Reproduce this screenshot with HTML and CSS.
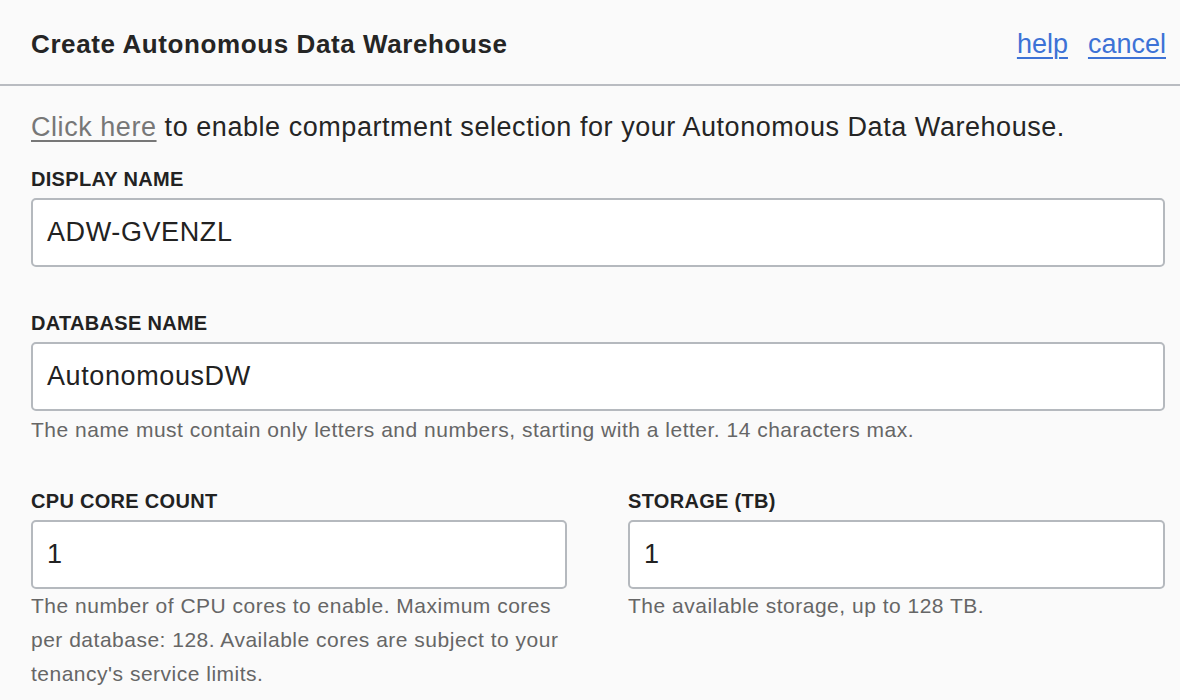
FILE: index.html
```html
<!DOCTYPE html>
<html lang="en">
<head>
<meta charset="utf-8">
<title>Create Autonomous Data Warehouse</title>
<link rel="stylesheet" href="styles.css">
</head>
<body>
<div class="dialog">
  <header class="dialog-header">
    <h1 class="dialog-title">Create Autonomous Data Warehouse</h1>
    <nav class="header-links">
      <a href="#" class="header-link">help</a>
      <a href="#" class="header-link">cancel</a>
    </nav>
  </header>
  <form class="dialog-body">
    <p class="intro"><a href="#" class="muted-link">Click here</a> to enable compartment selection for your Autonomous Data Warehouse.</p>

    <div class="field field-first">
      <label class="field-label">DISPLAY NAME</label>
      <div class="input">ADW-GVENZL</div>
    </div>

    <div class="field field-db">
      <label class="field-label">DATABASE NAME</label>
      <div class="input">AutonomousDW</div>
      <p class="help help-single">The name must contain only letters and numbers, starting with a letter. 14 characters max.</p>
    </div>

    <div class="field-row">
      <div class="field">
        <label class="field-label">CPU CORE COUNT</label>
        <div class="input">1</div>
        <p class="help">The number of CPU cores to enable. Maximum cores per database: 128. Available cores are subject to your tenancy's service limits.</p>
      </div>
      <div class="field">
        <label class="field-label">STORAGE (TB)</label>
        <div class="input">1</div>
        <p class="help">The available storage, up to 128 TB.</p>
      </div>
    </div>
  </form>
</div>
</body>
</html>
```

FILE: styles.css
```css
* { box-sizing: border-box; }

html, body {
  margin: 0;
  padding: 0;
  background: #fafafa;
  font-family: "Liberation Sans", Arial, Helvetica, sans-serif;
  color: #252525;
}

.dialog {
  width: 1180px;
  height: 700px;
  overflow: hidden;
}

.dialog-header {
  height: 86px;
  display: flex;
  align-items: center;
  justify-content: space-between;
  padding: 5px 14px 0 31px;
  border-bottom: 2px solid #b9bcc1;
}

.dialog-title {
  margin: 0;
  font-size: 26px;
  letter-spacing: 0.6px;
  font-weight: bold;
  color: #252525;
}

.header-links {
  display: flex;
  gap: 20px;
}

.header-link {
  font-size: 27px;
  color: #3d72d6;
  text-decoration: underline;
  text-decoration-thickness: 2px;
  text-underline-offset: 4px;
}

.dialog-body {
  display: block;
  padding: 24px 15px 0 31px;
}

.intro {
  margin: 0;
  font-size: 27px;
  letter-spacing: 0.55px;
  line-height: 34px;
  color: #252525;
}

.muted-link {
  color: #777;
  text-decoration: underline;
  text-decoration-thickness: 2px;
  text-underline-offset: 4px;
}

.field {
  display: flex;
  flex-direction: column;
}

.field-label {
  display: block;
  margin-top: 44px;
  margin-bottom: 7px;
  font-size: 20px;
  letter-spacing: 0.3px;
  line-height: 24px;
  font-weight: bold;
  color: #222;
}

.field-first .field-label {
  margin-top: 23px;
}

.field-row .field-label {
  margin-top: 42px;
}

.input {
  height: 69px;
  border: 2px solid #b5b9be;
  border-radius: 5px;
  background: #fff;
  padding: 0 14px;
  display: flex;
  align-items: center;
  font-size: 27px;
  letter-spacing: 0.6px;
  color: #222;
}

.help {
  margin: 0;
  font-size: 21px;
  letter-spacing: 0.5px;
  line-height: 34px;
  color: #666;
}

.help-single {
  margin-top: 2px;
}

.field-row {
  display: grid;
  grid-template-columns: 536px 537px;
  column-gap: 61px;
}
```
